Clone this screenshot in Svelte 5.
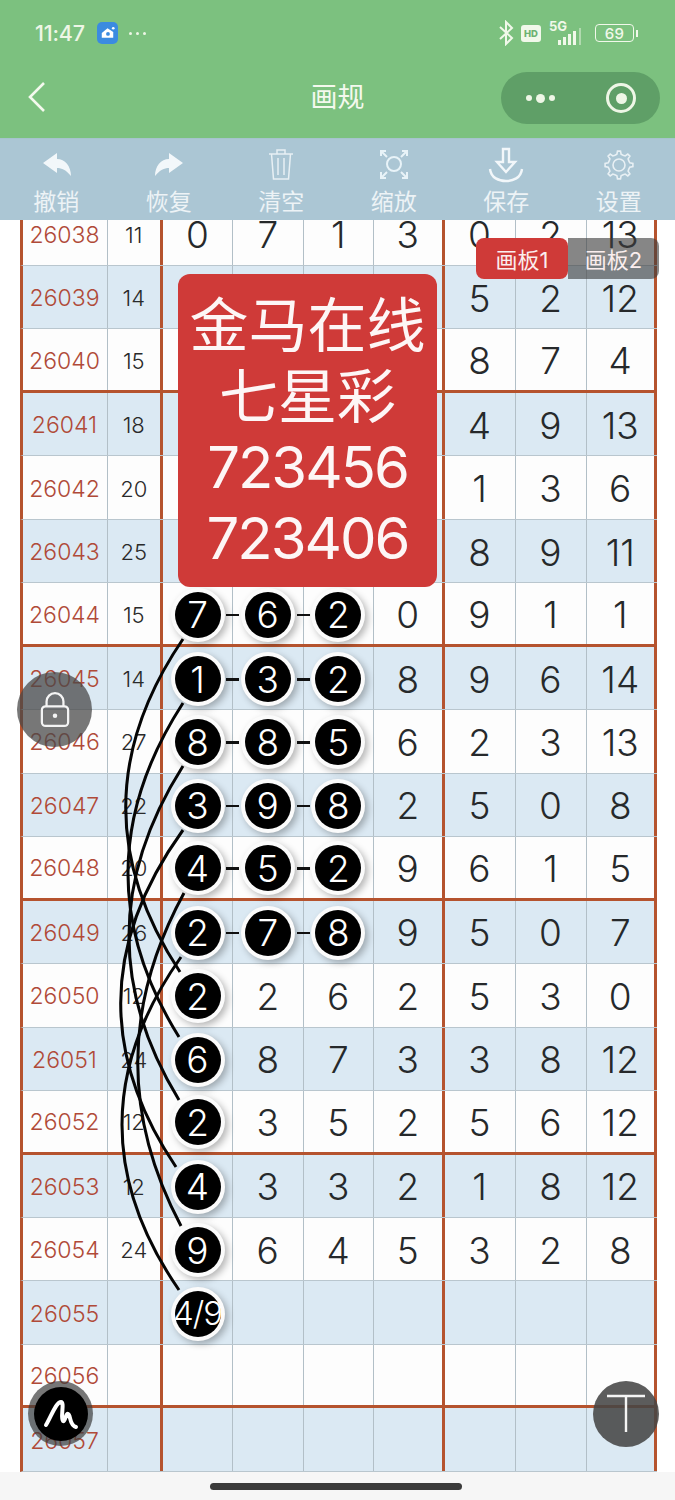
<script>
  const rows = [
    [26038, 11, '0', '7', '1', '3', '0', '2', '13'],
    [26039, 14, '', '', '', '', '5', '2', '12'],
    [26040, 15, '', '', '', '', '8', '7', '4'],
    [26041, 18, '', '', '', '', '4', '9', '13'],
    [26042, 20, '', '', '', '', '1', '3', '6'],
    [26043, 25, '', '', '', '', '8', '9', '11'],
    [26044, 15, '7*', '6*', '2*', '0', '9', '1', '1'],
    [26045, 14, '1*', '3*', '2*', '8', '9', '6', '14'],
    [26046, 27, '8*', '8*', '5*', '6', '2', '3', '13'],
    [26047, 22, '3*', '9*', '8*', '2', '5', '0', '8'],
    [26048, 20, '4*', '5*', '2*', '9', '6', '1', '5'],
    [26049, 26, '2*', '7*', '8*', '9', '5', '0', '7'],
    [26050, 12, '2*', '2', '6', '2', '5', '3', '0'],
    [26051, 24, '6*', '8', '7', '3', '3', '8', '12'],
    [26052, 12, '2*', '3', '5', '2', '5', '6', '12'],
    [26053, 12, '4*', '3', '3', '2', '1', '8', '12'],
    [26054, 24, '9*', '6', '4', '5', '3', '2', '8'],
    [26055, '', '4/9*', '', '', '', '', '', ''],
    [26056, '', '', '', '', '', '', '', ''],
    [26057, '', '', '', '', '', '', '', '']
  ];

  const curves = [
    'M183 639 Q70 805 180 972',
    'M183 703 Q75 870 179 1037',
    'M183 766 Q77 933 179 1100',
    'M183 830 Q62 998 176 1167',
    'M184 893 Q93 1060 181 1226',
    'M181 957 Q64 1123 179 1290'
  ];

  const tools = ['撤销', '恢复', '清空', '缩放', '保存', '设置'];

  function gearPath() {
    const cx = 15, cy = 15, teeth = 8;
    let d = '';
    for (let i = 0; i < teeth; i++) {
      const a = (i / teeth) * Math.PI * 2;
      const step = (Math.PI * 2) / teeth;
      const pts = [
        [10.6, a - step * 0.5],
        [11, a - step * 0.24],
        [14, a - step * 0.14],
        [14, a + step * 0.14],
        [11, a + step * 0.24]
      ];
      for (const [r, t] of pts) {
        const x = (cx + r * Math.cos(t)).toFixed(1);
        const y = (cy + r * Math.sin(t)).toFixed(1);
        d += (d ? 'L' : 'M') + x + ' ' + y + ' ';
      }
    }
    return d + 'Z';
  }
  const gear = gearPath();

  const isBall = (v) => String(v).endsWith('*');
  const label = (v) => String(v).replace('*', '');
  const sep = (r) => (r[0] - 26040) % 4 === 0;
</script>

<div class="app">
  <header class="top">
    <div class="status">
      <span class="time">11:47</span>
      <span class="appicon">
        <svg viewBox="0 0 22 22" width="22" height="22"><path d="M5 11 L11 6 L17 10 V16 H5 Z" fill="#fff"/><circle cx="11.5" cy="12" r="2" fill="#3b8be0"/><circle cx="17" cy="6" r="1.4" fill="#fff"/></svg>
      </span>
      <span class="more"><i></i><i></i><i></i></span>
      <span class="spacer"></span>
      <svg class="bt" viewBox="0 0 16 26" width="16" height="26"><path d="M2 7 L14 18 L8 24 V2 L14 8 L2 19" fill="none" stroke="#f1f8ea" stroke-width="2"/></svg>
      <span class="hd">HD</span>
      <span class="net">
        <span class="five">5G</span>
        <svg viewBox="0 0 38 18" width="38" height="18"><g fill="#f1f8ea"><rect x="10" y="12" width="3" height="5"/><rect x="15" y="9" width="3" height="8"/><rect x="20" y="6" width="3" height="11"/><rect x="25" y="3" width="3" height="14"/></g><rect x="31" y="0" width="2" height="17" fill="#f1f8ea" opacity=".45"/></svg>
      </span>
      <span class="battery"><span class="level">69</span></span>
      <span class="nub"></span>
    </div>
    <div class="nav">
      <svg class="back" viewBox="0 0 20 32" width="20" height="32"><path d="M17 2 L3 16 L17 30" fill="none" stroke="#f4f9ee" stroke-width="2.6"/></svg>
      <h1>画规</h1>
      <div class="capsule">
        <span class="dots"><i></i><b></b><i></i></span>
        <span class="target"><b></b></span>
      </div>
    </div>
  </header>

  <nav class="tools">
    {#each tools as t, i}
      <div class="tool">
        <svg viewBox="0 0 36 36" width="36" height="36" class="ticon">
          {#if i === 0}
            <path d="M5 16 L19 6 L19 12 C27 12 33 19 33 29 C28 23 24 21 19 21 L19 26 Z" fill="#f2f7fa"/>
          {:else if i === 1}
            <path d="M32 16 L18 6 L18 12 C10 12 4 19 4 29 C9 23 13 21 18 21 L18 26 Z" fill="#f2f7fa"/>
          {:else if i === 2}
            <g fill="none" stroke="#e8f0f4" stroke-width="1.5"><path d="M6 7 H30 M14 7 V3 H22 V7 M8.5 7 L10.5 32 H25.5 L27.5 7 M15 11 V28 M21 11 V28"/></g>
          {:else if i === 3}
            <g fill="none" stroke="#e8f3f8" stroke-width="2"><circle cx="18" cy="17" r="7"/><path d="M5 9 V4 H10 M5 4 L11 10 M31 9 V4 H26 M31 4 L25 10 M5 25 V31 H10 M5 31 L11 25 M31 25 V31 H26 M31 31 L25 25"/></g>
          {:else if i === 4}
            <g fill="none" stroke="#f2f7fa" stroke-width="2.4"><path d="M15 2 H21 V15 H27 L18 25 L9 15 H15 Z"/><path d="M2 22 C3 31 11 34 18 34 C25 34 33 31 34 22"/></g>
          {:else}
            <g transform="translate(3 3)" fill="none" stroke="#e8f0f4" stroke-width="1.6"><path d="{gear}"/><circle cx="15" cy="15" r="6"/></g>
          {/if}
        </svg>
        <span>{t}</span>
      </div>
    {/each}
  </nav>

  <main class="stage">
    <div class="board">
      {#each rows as r, ri}
        <div class="row" class:alt={ri % 2 === 1} class:sep={sep(r)}>
          <div class="cell issue">{r[0]}</div>
          <div class="cell sum thick">{r[1]}</div>
          {#each r.slice(2) as v, ci}
            <div class="cell num" class:thick={ci === 3 || ci === 6} class:linked={isBall(v) && ci > 0}>
              {#if isBall(v)}
                <span class="ball" class:wide={label(v).length > 1}>{label(v)}</span>
              {:else}
                {v}
              {/if}
            </div>
          {/each}
        </div>
      {/each}
    </div>

    <svg class="curves" viewBox="0 220 675 1252" width="675" height="1252">
      {#each curves as d}
        <path {d} fill="none" stroke="#050505" stroke-width="3"/>
      {/each}
    </svg>

    <div class="notice">
      <div>金马在线</div>
      <div>七星彩</div>
      <div class="digits">723456</div>
      <div class="digits">723406</div>
    </div>

    <div class="tabs">
      <span class="tab on">画板1</span>
      <span class="tab">画板2</span>
    </div>

    <div class="fab lock">
      <svg viewBox="0 0 32 38" width="30" height="36"><g fill="none" stroke="#f4f4f4" stroke-width="2.4"><path d="M7 15 V10 A9 9 0 0 1 25 10 V15"/><rect x="2" y="15" width="28" height="21" rx="4"/></g><circle cx="16" cy="25" r="2.4" fill="#f4f4f4"/></svg>
    </div>
    <div class="fab pen">
      <span>
        <svg viewBox="0 0 40 40" width="40" height="40"><path d="M5 31 C10 23 15 8 20 8 C24 8 19 25 22 27 C24 28 25 19 27 20 C30 21 28 31 35 33" fill="none" stroke="#fff" stroke-width="4" stroke-linecap="round"/></svg>
      </span>
    </div>
    <div class="fab top-btn">
      <svg viewBox="0 0 40 40" width="40" height="40"><path d="M1 2 H39 M20 2 V38" fill="none" stroke="#f4f4f4" stroke-width="2.4"/></svg>
    </div>
  </main>

  <footer class="home"><span></span></footer>
</div>

<style>
  :global(body) { margin: 0; background: #fff; }
  .app {
    width: 675px; height: 1500px; display: flex; flex-direction: column; overflow: hidden;
    font-family: Inter, "Noto Sans CJK SC", sans-serif; background: #fff;
  }
  .top { height: 138px; background: #7cc17f; flex: none; color: #f4f9ee; }
  .status { height: 66px; display: flex; align-items: center; padding: 0 37px 0 35px; }
  .time { font-size: 21.5px; font-weight: 500; letter-spacing: -.2px; color: #eef6e6; }
  .appicon { margin-left: 12px; width: 21px; height: 22px; background: #3b8be0; border-radius: 5px; display: flex; }
  .more { display: flex; gap: 4px; margin-left: 11px; }
  .more i { width: 3px; height: 3px; border-radius: 50%; background: #eef6e6; }
  .spacer { flex: 1; }
  .bt { margin-right: 7px; }
  .hd { width: 20px; height: 17px; border-radius: 3px; background: #f1f8ea; color: #6db272; font-size: 9.5px; font-weight: 800; line-height: 17px; text-align: center; margin-right: 7px; }
  .net { position: relative; width: 38px; height: 26px; display: flex; align-items: flex-end; margin-right: 9px; }
  .five { position: absolute; left: 1px; top: -2px; font-size: 13px; font-weight: 700; color: #f1f8ea; }
  .battery { width: 37px; height: 16px; border: 1.5px solid #f1f8ea; border-radius: 4px; display: flex; align-items: center; justify-content: center; }
  .level { font-size: 15px; font-weight: 500; color: #f1f8ea; letter-spacing: .4px; }
  .nub { width: 2px; height: 7px; margin-left: 2px; background: #f1f8ea; }
  .nav { height: 72px; position: relative; display: flex; align-items: center; justify-content: center; padding-bottom: 10px; box-sizing: border-box; }
  .back { position: absolute; left: 27px; top: 15px; }
  h1 { margin: 0; font-size: 27px; font-weight: 400; line-height: 1; }
  .capsule { position: absolute; left: 501px; top: 6px; width: 159px; height: 52px; border-radius: 26px; background: #5f9f67; display: flex; align-items: center; }
  .dots { width: 78px; display: flex; align-items: center; justify-content: center; gap: 4px; }
  .dots i { width: 6px; height: 6px; border-radius: 50%; background: #eef6e6; }
  .dots b { width: 9px; height: 9px; border-radius: 50%; background: #eef6e6; }
  .target { margin-left: 27px; width: 30px; height: 30px; box-sizing: border-box; border: 3.5px solid #eef6e6; border-radius: 50%; display: flex; align-items: center; justify-content: center; }
  .target b { width: 11px; height: 11px; border-radius: 50%; background: #eef6e6; }

  .tools { height: 82px; flex: none; background: #abc6d4; display: flex; box-sizing: border-box; border-top: 1px solid #a6c4cd; }
  .tool { flex: 1; display: flex; flex-direction: column; align-items: center; color: #edf3f6; font-size: 23px; line-height: 28px; padding-top: 8px; box-sizing: border-box; }
  .ticon { display: block; }
  .tool span { display: block; margin-top: 5px; }

  .stage { position: relative; height: 1252px; flex: none; overflow: hidden; }
  .board { margin-top: -17.5px; padding-left: 19.5px; width: 639px; }
  .row {
    display: grid; grid-template-columns: 85px 55.5px 70px 70.5px 70.5px 70.5px 71px 71px 70.5px;
    height: 63.47px; box-sizing: border-box; border-left: 3px solid #b5532e;
    background: #fdfdfd; border-bottom: 1.5px solid #b9c6ce; width: 637px;
  }
  .row.alt { background: #dbe9f3; }
  .row.sep { border-bottom: 3px solid #b5532e; }
  .cell { display: flex; align-items: center; justify-content: center; box-sizing: border-box; border-right: 1.5px solid #b2bfc7; position: relative; padding-top: 2px; }
  .cell.thick { border-right: 3px solid #b5532e; }
  .issue { font-size: 23px; font-weight: 300; color: #b04a38; }
  .sum { font-size: 22px; font-weight: 300; color: #2a2a2a; }
  .num { font-size: 37px; font-weight: 300; color: #26292b; }
  .linked::before {
    content: ""; position: absolute; left: -7px; top: 50%; width: 13px; height: 2.5px; background: #111;
  }
  .ball {
    position: relative; z-index: 2; width: 46px; height: 46px; border-radius: 50%; background: #000; color: #fff;
    box-shadow: 0 0 0 4px #fbfbfb, 3px 3px 7px 4px rgba(0,0,0,.28);
    display: flex; align-items: center; justify-content: center; font-size: 37px; font-weight: 300; line-height: 1;
  }
  .ball.wide { font-size: 33px; letter-spacing: -1px; white-space: nowrap; }

  .curves { position: absolute; left: 0; top: 0; z-index: 1; pointer-events: none; }

  .notice {
    position: absolute; z-index: 3; left: 178px; top: 54px; width: 259px; height: 313px; box-sizing: border-box; padding-top: 16px;
    border-radius: 12px; background: #cf3a38; color: #fdf6f6; text-align: center; font-size: 59px; line-height: 71px;
  }
  .digits { font-size: 58px; font-weight: 400; letter-spacing: -2px; }

  .tabs { position: absolute; z-index: 3; left: 476px; top: 18px; display: flex; height: 41px; font-size: 22px; }
  .tab { width: 91px; line-height: 45px; text-align: center; color: #fbeeee; background: rgba(62,62,62,.62); border-radius: 0 8px 8px 0; }
  .tab.on { width: 92px; background: #cf3a38; border-radius: 8px; }

  .fab { position: absolute; z-index: 4; border-radius: 50%; display: flex; align-items: center; justify-content: center; }
  .lock { left: 17px; top: 452px; width: 75px; height: 75px; background: rgba(72,72,72,.74); }
  .pen { left: 28px; top: 1161px; width: 65px; height: 65px; background: rgba(60,60,60,.7); }
  .pen span { width: 54px; height: 54px; border-radius: 50%; background: #000; display: flex; align-items: center; justify-content: center; }
  .top-btn { left: 593px; top: 1161px; width: 66px; height: 66px; background: rgba(70,70,70,.88); }

  .home { height: 28px; flex: none; background: #f6f6f6; display: flex; justify-content: center; padding: 11px 4px 0 0; box-sizing: border-box; }
  .home span { width: 252px; height: 7px; border-radius: 4px; background: #3b3b3b; }
</style>
